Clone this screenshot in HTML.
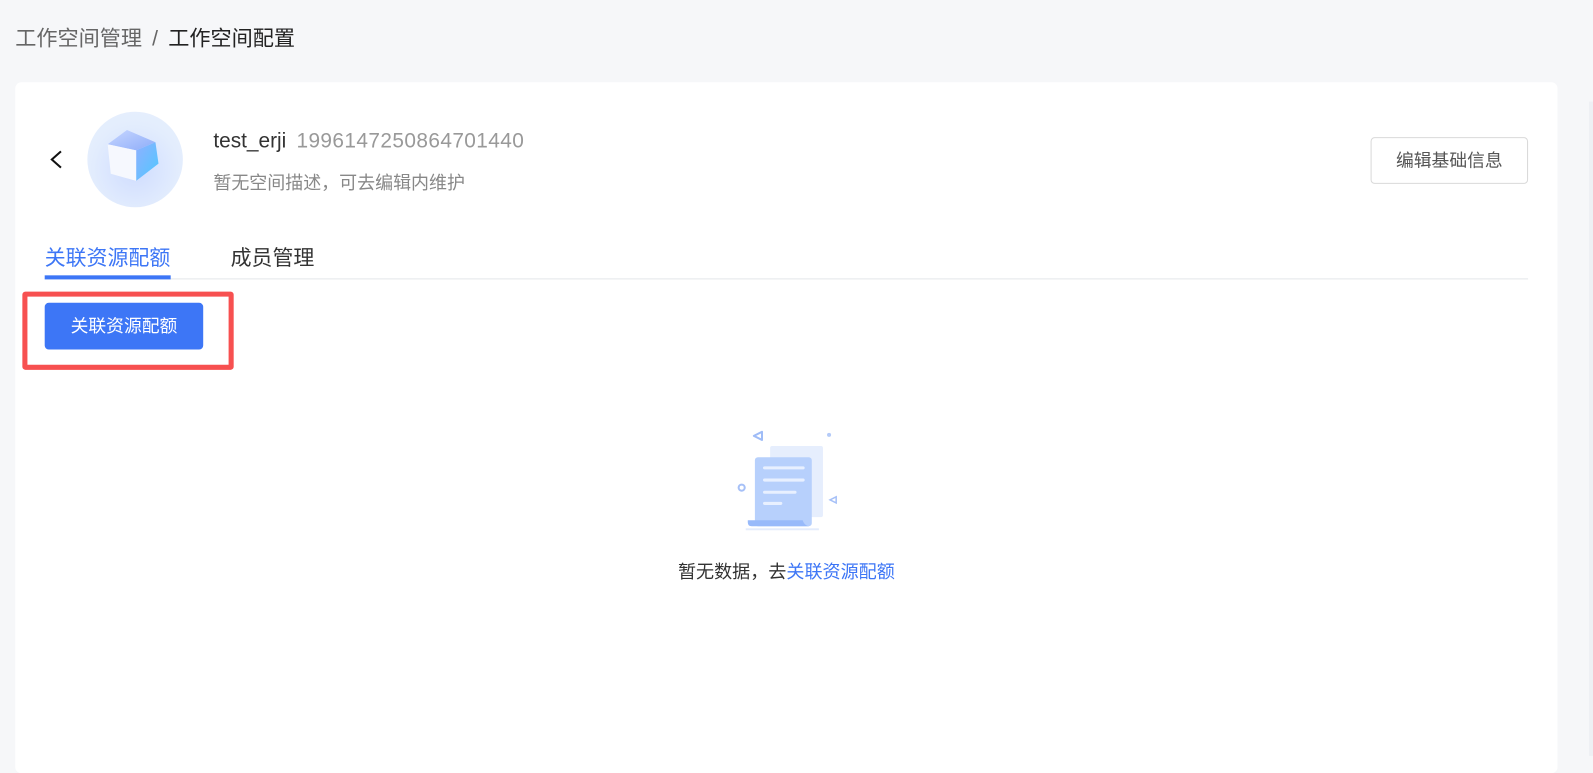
<!DOCTYPE html>
<html><head><meta charset="utf-8">
<style>
*{margin:0;padding:0;box-sizing:border-box}
html,body{width:1593px;height:744px;overflow:hidden;background:#f6f7f9}
#w{position:absolute;left:0;top:0;width:1568px;height:732px;transform:scale(1.016);transform-origin:0 0;font-family:"Liberation Sans","Noto Sans CJK SC",sans-serif}
.bc{position:absolute;left:15px;top:21px;font-size:20.8px;color:#666}
.bc .s{margin:0 10px;color:#666}
.bc .c{color:#222}
.card{position:absolute;left:15px;top:81px;width:1518px;height:680px;background:#fff;border-radius:6px}
.strip{position:absolute;left:1564px;top:100px;width:4px;height:644px;background:#eef0f4}
.back{position:absolute;left:47px;top:146px}
.av{position:absolute;left:86px;top:110px;width:94px;height:94px;border-radius:50%;background:radial-gradient(circle at 50% 60%,#cfdcff 0%,#e3edfd 60%,#e8f0fd 100%)}
.name{position:absolute;left:210px;top:127px;font-size:20.5px;color:#333}
.name span{color:#999;margin-left:10px;letter-spacing:0.4px}
.desc{position:absolute;left:210px;top:166px;font-size:17.7px;color:#888}
.edit{position:absolute;left:1349px;top:135px;width:155px;height:46px;border:1px solid #d9d9d9;border-radius:4px;font-size:17.5px;color:#555;text-align:center;line-height:44px}
.tab1{position:absolute;left:44px;top:237px;font-size:20.6px;color:#3d76f6}
.ul{position:absolute;left:44px;top:271px;width:124px;height:4px;background:#3d76f6}
.line{position:absolute;left:44px;top:274px;width:1460px;height:1px;background:#e4e6ea}
.tab2{position:absolute;left:227px;top:237px;font-size:20.6px;color:#333}
.red{position:absolute;left:22px;top:287px;width:208px;height:77px;border:5px solid #f75050;border-radius:3px}
.btn{position:absolute;left:44px;top:298px;width:156px;height:46px;background:#3d76f6;border-radius:4px;color:#fff;font-size:17.5px;text-align:center;line-height:46px}
.empty{position:absolute;left:0;width:1548px;top:549px;text-align:center;font-size:17.8px;color:#333}
.empty a{color:#3d76f6;text-decoration:none}
</style></head><body><div id="w">
<div class="bc">工作空间管理<span class="s">/</span><span class="c">工作空间配置</span></div>
<div class="card"></div>
<div class="strip"></div>
<svg class="back" width="18" height="24" viewBox="0 0 18 24"><path d="M13 3 L4 11 L13 19" fill="none" stroke="#111" stroke-width="2"/></svg>
<div class="av"></div>
<svg style="position:absolute;left:101px;top:127px" width="60" height="60" viewBox="0 0 60 60">
<defs><linearGradient id="g1" x1="0" y1="0" x2="1" y2="1"><stop offset="0" stop-color="#8fb0ff"/><stop offset="1" stop-color="#4fc8ff"/></linearGradient>
<linearGradient id="g2" x1="0" y1="0" x2="1" y2="1"><stop offset="0" stop-color="#c7d6ff"/><stop offset="1" stop-color="#8eadf9"/></linearGradient></defs>
<path d="M24 1 L52 13 L33 21 L5 15 Z" fill="url(#g2)"/>
<path d="M33 21 L52 13 L55 34 L33 51 Z" fill="url(#g1)"/>
<path d="M5 15 L33 21 L33 51 L8 44 Z" fill="#f6f8fe"/>
</svg>
<div class="name">test_erji<span>1996147250864701440</span></div>
<div class="desc">暂无空间描述，可去编辑内维护</div>
<div class="edit">编辑基础信息</div>
<div class="tab1">关联资源配额</div>
<div class="tab2">成员管理</div>
<div class="line"></div>
<div class="ul"></div>
<div class="red"></div>
<div class="btn">关联资源配额</div>
<svg style="position:absolute;left:720px;top:417px" width="110" height="105" viewBox="0 0 110 105">
<rect x="38" y="22" width="52" height="70" rx="2" fill="#e6eefd"/>
<rect x="23" y="33" width="56" height="68" rx="3" fill="#b7d0fc"/>
<path d="M16 95 L70 95 Q72 101 78 101 L20 101 Q16 101 16 97 Z" fill="#98bafa"/>
<rect x="14" y="103" width="72" height="2" fill="#e4ecfc"/>
<rect x="31" y="42" width="41" height="3" rx="1.5" fill="#e8f0ff"/>
<rect x="31" y="54" width="41" height="3" rx="1.5" fill="#e8f0ff"/>
<rect x="31" y="66" width="33" height="3" rx="1.5" fill="#e8f0ff"/>
<rect x="31" y="77" width="19" height="3" rx="1.5" fill="#e8f0ff"/>
<path d="M30 8 L22 12 L30 16 Z" fill="none" stroke="#9fbcf7" stroke-width="2" stroke-linejoin="round"/>
<circle cx="96" cy="11" r="2" fill="#b5cbf8"/>
<circle cx="10" cy="63" r="3" fill="none" stroke="#a6c0f7" stroke-width="2"/>
<path d="M103 72 L97 75 L103 78 Z" fill="none" stroke="#a6c0f7" stroke-width="1.5"/>
</svg>
<div class="empty">暂无数据，去<a>关联资源配额</a></div>
</div></body></html>
